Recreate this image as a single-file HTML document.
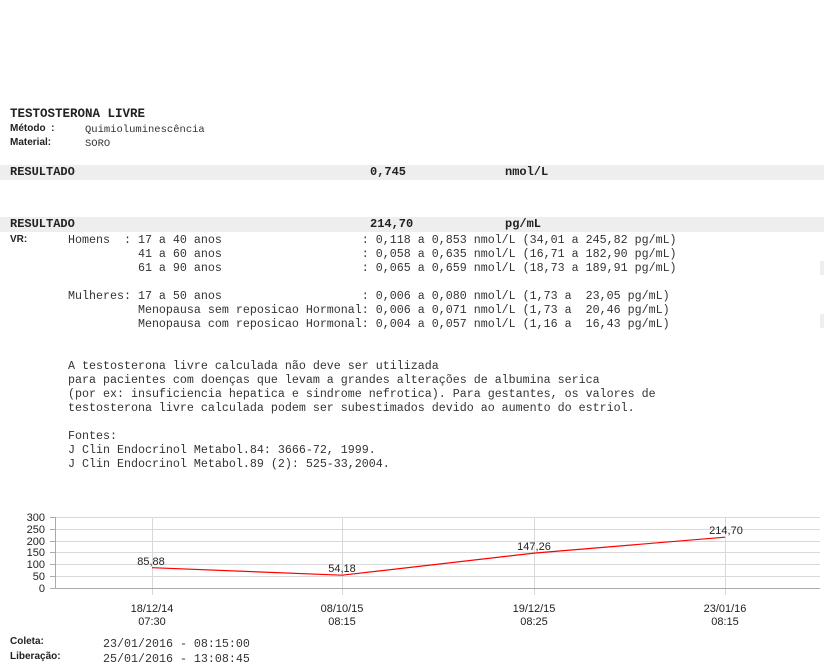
<!DOCTYPE html>
<html><head><meta charset="utf-8"><style>
body{margin:0;width:824px;height:669px;background:#fff;position:relative;overflow:hidden;font-family:"Liberation Mono","Courier New",monospace;color:#333}
.a{position:absolute;white-space:pre;margin:0;font-family:"Liberation Mono","Courier New",monospace}
.m{font-size:11.67px;line-height:14px}
.b{font-weight:bold;color:#222}
.lab{font-family:"Liberation Sans",sans-serif;font-weight:bold;font-size:10px;color:#222}
.bar{position:absolute;left:0;width:824px;height:15px;background:#eeeeee}
</style></head><body>
<div class="a b" style="left:10px;top:107px;font-size:12.5px;line-height:14px">TESTOSTERONA LIVRE</div>
<div class="a lab" style="left:10px;top:123px">Método  :</div>
<div class="a m" style="left:85px;top:123px;font-size:10.5px">Quimioluminescência</div>
<div class="a lab" style="left:10px;top:137px">Material:</div>
<div class="a m" style="left:85px;top:137px;font-size:10.5px">SORO</div>

<div class="bar" style="top:165px"></div>
<div class="a b" style="left:10px;top:165px;font-size:12px;line-height:15px">RESULTADO</div>
<div class="a b" style="left:370px;top:165px;font-size:12px;line-height:15px">0,745</div>
<div class="a b" style="left:505px;top:165px;font-size:12px;line-height:15px">nmol/L</div>

<div class="bar" style="top:217px"></div>
<div class="a b" style="left:10px;top:217px;font-size:12px;line-height:15px">RESULTADO</div>
<div class="a b" style="left:370px;top:217px;font-size:12px;line-height:15px">214,70</div>
<div class="a b" style="left:505px;top:217px;font-size:12px;line-height:15px">pg/mL</div>

<div class="a lab" style="left:10px;top:234px">VR:</div>
<pre class="a m" style="left:68px;top:233px">Homens  : 17 a 40 anos                    : 0,118 a 0,853 nmol/L (34,01 a 245,82 pg/mL)
          41 a 60 anos                    : 0,058 a 0,635 nmol/L (16,71 a 182,90 pg/mL)
          61 a 90 anos                    : 0,065 a 0,659 nmol/L (18,73 a 189,91 pg/mL)

Mulheres: 17 a 50 anos                    : 0,006 a 0,080 nmol/L (1,73 a  23,05 pg/mL)
          Menopausa sem reposicao Hormonal: 0,006 a 0,071 nmol/L (1,73 a  20,46 pg/mL)
          Menopausa com reposicao Hormonal: 0,004 a 0,057 nmol/L (1,16 a  16,43 pg/mL)


A testosterona livre calculada não deve ser utilizada
para pacientes com doenças que levam a grandes alterações de albumina serica
(por ex: insuficiencia hepatica e sindrome nefrotica). Para gestantes, os valores de
testosterona livre calculada podem ser subestimados devido ao aumento do estriol.

Fontes:
J Clin Endocrinol Metabol.84: 3666-72, 1999.
J Clin Endocrinol Metabol.89 (2): 525-33,2004.</pre>
<div style="position:absolute;left:820px;top:261px;width:4px;height:14px;background:#eee"></div>
<div style="position:absolute;left:820px;top:314px;width:4px;height:14px;background:#eee"></div>

<svg style="position:absolute;left:0;top:0" width="824" height="669" font-family="Liberation Sans, sans-serif" font-size="11" fill="#222">
<g stroke="#d9d9d9" stroke-width="1">
<line x1="55" y1="517.5" x2="820" y2="517.5"/><line x1="55" y1="529.5" x2="820" y2="529.5"/>
<line x1="55" y1="541.5" x2="820" y2="541.5"/><line x1="55" y1="552.5" x2="820" y2="552.5"/>
<line x1="55" y1="564.5" x2="820" y2="564.5"/><line x1="55" y1="576.5" x2="820" y2="576.5"/>
<line x1="152.5" y1="517" x2="152.5" y2="595"/><line x1="342.5" y1="517" x2="342.5" y2="595"/>
<line x1="534.5" y1="517" x2="534.5" y2="595"/><line x1="725.5" y1="517" x2="725.5" y2="595"/>
</g>
<g stroke="#aaa"><line x1="55.5" y1="517" x2="55.5" y2="588"/><line x1="50" y1="588.5" x2="820" y2="588.5"/>
<line x1="50" y1="517.5" x2="55" y2="517.5"/><line x1="50" y1="529.5" x2="55" y2="529.5"/><line x1="50" y1="541.5" x2="55" y2="541.5"/><line x1="50" y1="552.5" x2="55" y2="552.5"/><line x1="50" y1="564.5" x2="55" y2="564.5"/><line x1="50" y1="576.5" x2="55" y2="576.5"/></g>
<g text-anchor="end"><text x="45" y="521">300</text><text x="45" y="533">250</text><text x="45" y="545">200</text><text x="45" y="556">150</text><text x="45" y="568">100</text><text x="45" y="580">50</text><text x="45" y="592">0</text></g>
<polyline points="152,567.7 342,575.2 534,553.1 725,537.2" fill="none" stroke="#f00" stroke-width="1.2"/>
<g text-anchor="middle">
<text x="151" y="565">85,88</text><text x="342" y="572">54,18</text><text x="534" y="550">147,26</text><text x="726" y="534">214,70</text>
<text x="152" y="612">18/12/14</text><text x="152" y="625">07:30</text>
<text x="342" y="612">08/10/15</text><text x="342" y="625">08:15</text>
<text x="534" y="612">19/12/15</text><text x="534" y="625">08:25</text>
<text x="725" y="612">23/01/16</text><text x="725" y="625">08:15</text>
</g></svg>

<div class="a lab" style="left:10px;top:636px">Coleta:</div>
<div class="a m" style="left:103px;top:637px">23/01/2016 - 08:15:00</div>
<div class="a lab" style="left:10px;top:651px">Liberação:</div>
<div class="a m" style="left:103px;top:652px">25/01/2016 - 13:08:45</div>
</body></html>
